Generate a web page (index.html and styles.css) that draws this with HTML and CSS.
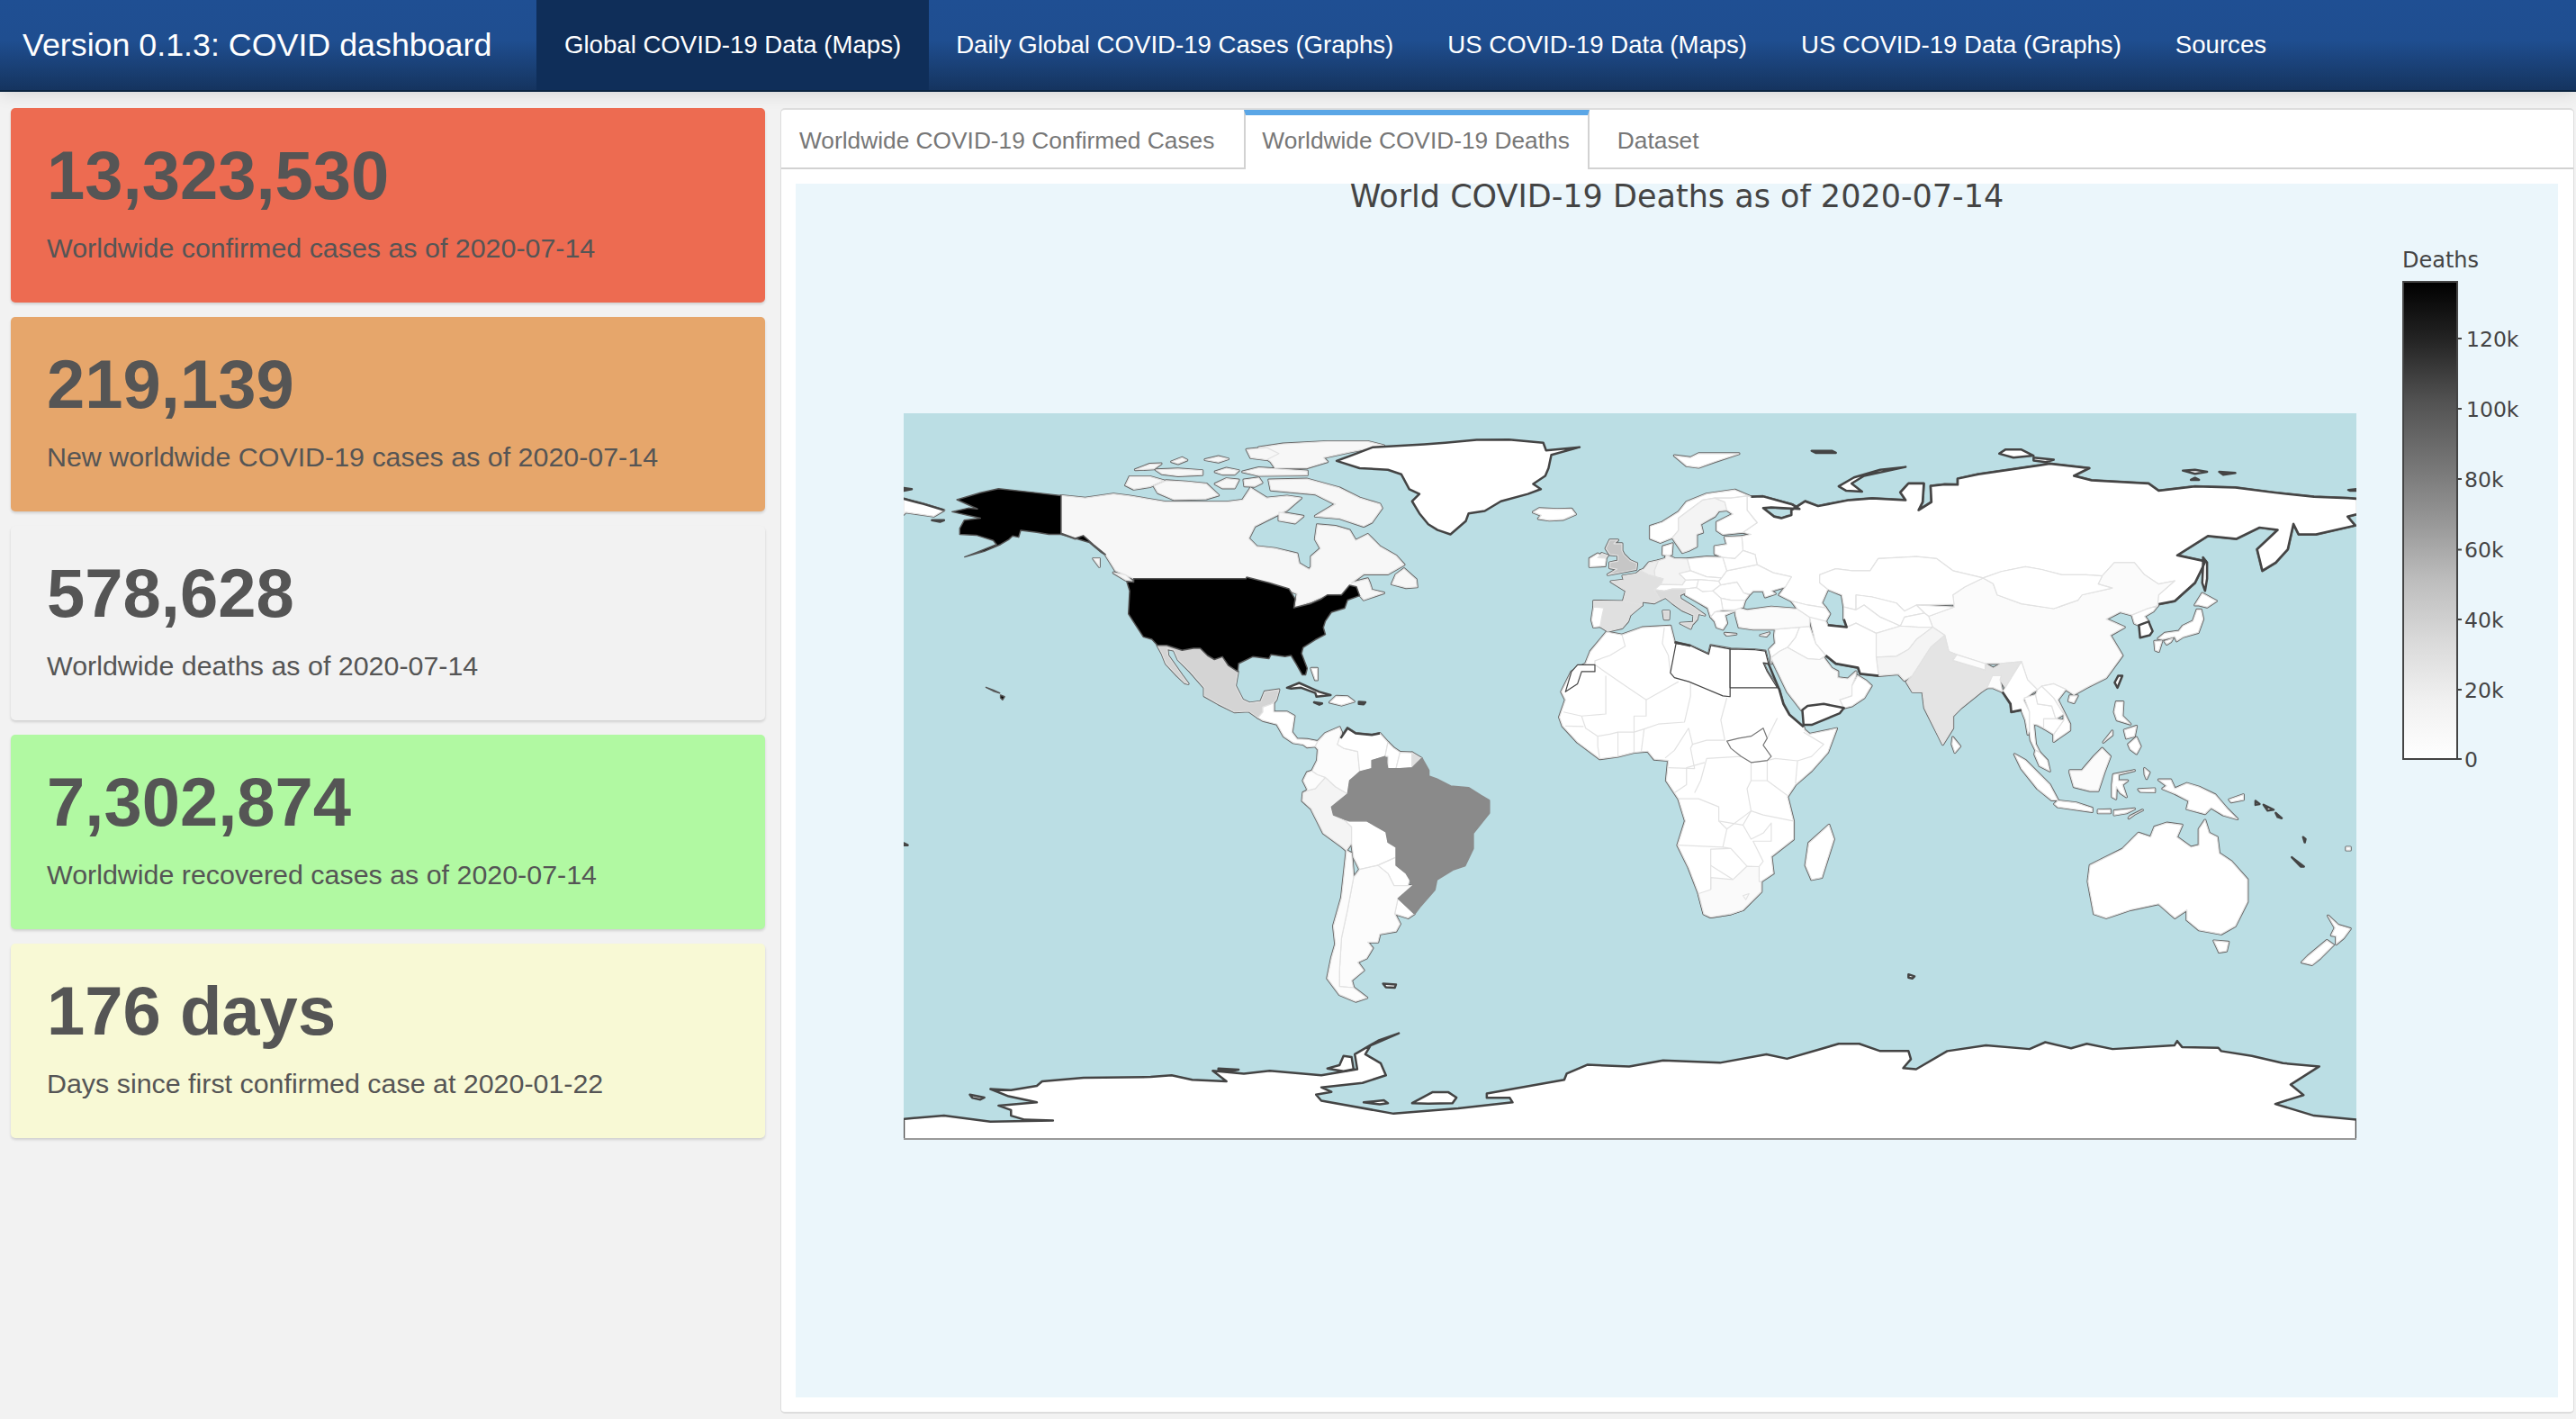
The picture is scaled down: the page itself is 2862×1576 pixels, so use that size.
FILE: index.html
```html
<!DOCTYPE html>
<html lang="en">
<head>
    <meta charset="UTF-8">
    <title>COVID dashboard</title>
    <link rel="stylesheet" href="styles.css">
</head>
<body>
<div class="navbar">
    <div class="brand">Version 0.1.3: COVID dashboard</div>
    <ul class="nav">
        <li class="nav-selected">Global COVID-19 Data (Maps)</li>
        <li>Daily Global COVID-19 Cases (Graphs)</li>
        <li>US COVID-19 Data (Maps)</li>
        <li>US COVID-19 Data (Graphs)</li>
        <li>Sources</li>
    </ul>
</div>
<div class="main">
    <div class="cards">
        <div class="card card-red"><h3>13,323,530</h3><p>Worldwide confirmed cases as of 2020-07-14</p></div>
        <div class="card card-orange"><h3>219,139</h3><p>New worldwide COVID-19 cases as of 2020-07-14</p></div>
        <div class="card card-grey"><h3>578,628</h3><p>Worldwide deaths as of 2020-07-14</p></div>
        <div class="card card-green"><h3>7,302,874</h3><p>Worldwide recovered cases as of 2020-07-14</p></div>
        <div class="card card-yellow"><h3>176 days</h3><p>Days since first confirmed case at 2020-01-22</p></div>
    </div>
    <div class="panel">
        <ul class="tabs">
            <li>Worldwide COVID-19 Confirmed Cases</li>
            <li class="tab-selected">Worldwide COVID-19 Deaths</li>
            <li>Dataset</li>
        </ul>
        <div class="tab-body">
<svg class="plot" width="1958" height="1348" viewBox="0 0 1958 1348">
    <defs>
        <linearGradient id="greys" x1="0" y1="1" x2="0" y2="0">
            <stop offset="0" stop-color="#ffffff"/>
            <stop offset="0.125" stop-color="#f0f0f0"/>
            <stop offset="0.25" stop-color="#d9d9d9"/>
            <stop offset="0.375" stop-color="#bdbdbd"/>
            <stop offset="0.5" stop-color="#969696"/>
            <stop offset="0.625" stop-color="#737373"/>
            <stop offset="0.75" stop-color="#525252"/>
            <stop offset="0.875" stop-color="#252525"/>
            <stop offset="1" stop-color="#000000"/>
        </linearGradient>
        <!-- coordinates are lon,lat -->
        <g id="land">
            <!-- north america -->
            <polygon class="c-canada" points="-141,69.6 -135,69 -128,70 -124,69.5 -115,68 -108,68 -100,68 -96,68.5 -94,71.5 -90,69 -85,69.5 -81.5,69 -85,66 -87,65 -93,62 -94.5,59 -92.5,57 -88,56.5 -82.5,55.2 -82,52.8 -79.5,51.3 -79,52 -79,54.5 -76.7,56.5 -78,58.8 -77.5,62.4 -73,62 -69.5,61 -68,58.5 -65,60 -62,57 -58,54.7 -56,52.5 -60,50.2 -66,50.2 -69,48 -65,49 -64.5,47.8 -64,46.2 -61,45.5 -66,43.8 -67,45 -69,47.4 -71,45.2 -75,45 -79,43.3 -83,42 -82.5,45.3 -89,48 -95,49 -123,49 -127.5,51 -130,55 -133,57.5 -135.5,59.7 -137.5,59 -141,60.3"/>
            <polygon class="c-canada" points="-61.5,66.5 -64,63 -66,62 -72,64 -78,64.5 -73,67.5 -78,70 -89,71 -89.5,73.5 -80,73.7 -72,71.5 -67,69 -62,67.5"/>
            <polygon class="c-canada" points="-118,72 -117,70.3 -113,68.6 -105,68.8 -102,69.7 -105,72.5 -110,73 -115,73.3"/>
            <polygon class="c-canada" points="-125,72.2 -123,71.2 -119,71.8 -115.5,73.3 -119,74.3 -124,74.3"/>
            <polygon class="c-canada" points="-117.500,76 -112,76.2 -106,75.8 -106,74.800 -112,74.500 -116,75"/>
            <polygon class="c-canada" points="-122.600,76 -119,77.400 -116.200,77.500 -118,76.200"/>
            <polygon class="c-canada" points="-113.600,78 -111,79 -109.800,78.400 -112,77.500"/>
            <polygon class="c-canada" points="-105.300,78.500 -102,79.300 -99.600,78.700 -102,77.900"/>
            <polygon class="c-canada" points="-102.800,75.500 -100,76.400 -97,75.800 -98,74.900 -101,74.900"/>
            <polygon class="c-canada" points="-102.800,72.500 -100,73.800 -97,73.500 -98,71.500 -101,71.500"/>
            <polygon class="c-canada" points="-95.700,73.500 -92,74 -91.200,72.800 -93,71.900 -95.500,72"/>
            <polygon class="c-canada" points="-92,81.5 -86,82.4 -75,83 -65,83 -61,82 -69,80.5 -76,79 -75,78 -80,76.5 -88,76.5 -89,78 -92,80"/>
            <polygon class="c-canada" points="-95,81 -90,81.5 -87,80 -90,78.5 -94,79"/>
            <polygon class="c-canada" points="-92,76.5 -80,75.7 -80,74.7 -92,74.6 -96,75.5"/>
            <polygon class="c-canada" points="-87,65.5 -81,64.5 -83,62.8 -87,63.5"/>
            <polygon class="c-canada" points="-59,47.7 -55.5,46.8 -52.8,47 -53,48.8 -56,51.5 -58,50"/>
            <polygon class="c-canada" points="-128,50.5 -125,50 -123.4,48.4 -125,48.7"/>
            <polygon class="c-canada" points="-133,54 -131.5,54 -131.5,52"/>
            <polygon class="c-white" points="-24,65.5 -22.5,66.4 -18,66.2 -14.5,66.3 -13.5,65 -16.5,63.7 -20,63.5 -22.7,63.9 -22,64.7"/>
            <polygon class="c-mexico" points="-117.1,32.5 -114.8,32.5 -111,31.3 -108.2,31.8 -106.5,31.8 -104.7,30 -103,29 -101,29.7 -99.5,27.5 -97.2,26 -97.8,22.5 -96,19 -94.3,18.2 -91.5,18.6 -90.5,21 -87,21.5 -87.7,19 -88.3,18.3 -89.1,17.9 -91,17.2 -91,16 -92.2,14.6 -94.5,16.2 -98,16 -102,18 -105.5,20 -105.5,22 -109,26 -112,29 -113,31.3 -114.7,31.7 -114.5,30 -111,25 -109.5,23 -110.3,23.2 -112.2,25 -115,28 -116,30.5"/>
            <polygon class="c-white" points="-92.2,14.6 -91,16 -91,17.2 -89.1,17.9 -88.3,18.3 -88.3,16 -85,16 -83.2,15 -83.8,11 -82.5,9.3 -80,9.2 -77.4,8.7 -78,7.5 -80,7.3 -81,8 -83.5,8.4 -85.8,10 -87.5,13 -91,13.9"/>
            <polygon class="c-white" points="-74.4,18.4 -72.8,19.9 -70,19.8 -68.4,18.6 -71.5,17.7"/>
            <polygon class="c-white" points="-79,26.8 -77.5,26.8 -77.5,24 -78,24"/>
            <!-- south america -->
            <polygon class="c-peru" points="-81.2,-6 -79,-8 -76,-14 -71.5,-17.3 -70.3,-18.3 -69,-16.5 -69,-12.5 -70.5,-11 -73.5,-9.5 -74,-7.5 -70,-4.3 -73,-2.5 -75.5,-0.2 -78,-3 -80,-3.5 -81,-4"/>
            <polygon class="c-light" points="-80,-3.5 -78,-3 -75.5,-0.2 -77.5,0.5 -78.8,1.4 -80,1 -81,-1 -80,-3"/>
            <polygon class="c-light" points="-77.4,8.7 -75.5,10.7 -72,12.2 -71.5,11 -72.5,8 -71,7 -67.5,6.2 -67,1.2 -69.5,-1 -70,-4.3 -73,-2.5 -75.5,-0.2 -77.5,0.5 -78.8,1.4 -77.5,4 -77.3,6.7 -78,7.5"/>
            <polygon class="c-white" points="-71.5,11 -71.7,9.5 -70,12 -68,10.7 -64,10.3 -62,10.7 -60,8.5 -60.7,5 -64,4 -64,2 -67,1.2 -67.5,6.2 -71,7 -72.5,8"/>
            <polygon class="c-white" points="-60,8.5 -58.5,7 -57,6 -58,2 -60,2 -60,5 -60.7,5"/>
            <polygon class="c-white" points="-57,6 -54,5.9 -54,2.2 -57,2 -58,2"/>
            <polygon class="c-guiana" points="-54,5.9 -51.7,4.5 -54,2.2"/>
            <polygon class="c-white" points="-69.5,-11 -65.3,-11 -60.5,-13.7 -60,-16.3 -58,-17.5 -58,-20 -62.5,-22 -67,-23 -68.5,-20 -69,-16.5 -69,-12.5 -70.5,-11"/>
            <polygon class="c-white" points="-58,-20 -58,-22 -55.5,-24 -54.6,-25.5 -55,-27 -58.5,-27 -60,-24 -62.5,-22"/>
            <polygon class="c-white" points="-57.5,-30.2 -53.5,-34 -55,-35 -58.3,-34"/>
            <polygon class="c-light" points="-67,-23 -62.5,-22 -60,-24 -58.5,-27 -55,-27 -53.8,-27 -57.5,-30.2 -58.3,-34 -57,-36.5 -58,-38.3 -62,-39 -62.5,-41 -65,-41 -63.8,-42.5 -65.3,-45 -67.5,-46 -66,-48 -69,-50.5 -68.5,-52.3 -72,-52 -72,-48 -71.5,-40 -70,-33 -68.5,-25"/>
            <polygon class="c-light" points="-70.3,-18.3 -69,-19 -68.5,-25 -70,-33 -71.5,-40 -72,-48 -72,-52 -68.5,-52.3 -65.2,-54.8 -68,-55.7 -72,-54 -75,-50 -74,-45 -73,-41.5 -73.5,-37 -71.5,-30 -70.3,-19"/>
            <polygon class="c-brazil" points="-51.7,4.5 -50,1.5 -50,0 -48,-0.7 -44.5,-2.5 -40,-2.9 -37,-4.8 -35,-6 -35,-9 -37,-11.5 -39,-14 -39,-17.8 -41,-22 -44,-23 -48,-25.5 -48.5,-28 -52,-32 -53.5,-34 -57.5,-30.2 -53.8,-27 -54.6,-25.5 -55.5,-24 -58,-22 -58,-20 -58,-17.5 -60,-16.3 -60.5,-13.7 -65.3,-11 -69.5,-11 -73.5,-9.5 -74,-7.5 -70,-4.3 -69.5,-1 -67,1.2 -64,2 -64,4 -60.7,5 -60,2 -57,2 -54,2.2"/>
            <!-- africa -->
            <polygon class="c-white" points="-5.8,35.8 -2,35.1 3,36.9 10,37.3 11,33.3 15,32.4 19.5,30.3 20,32.5 25,31.6 31,31.4 33.5,31.1 34.3,28 33,28.2 34,26 37,21.5 38,18 39.5,15.3 43,12.3 43.3,11.5 44.5,10.5 51.2,11.9 49,6 45,1.5 41,-2 39,-5 40.5,-11 40.5,-15.5 35,-19.8 35.5,-24 32.5,-26 32.5,-28.5 28,-33 25,-34 20,-34.8 18.3,-34 17,-29 14.5,-22.5 11.8,-17 13.7,-11 12,-5.5 9,-1 9.5,4 6,4.3 4.4,6.3 1,6 -3,5 -7.5,4.4 -13,8.5 -16.7,12.5 -17.5,14.7 -16,19 -17,21 -14.5,26 -11,28 -9.8,31"/>
            <polygon class="c-south" points="17,-29 20,-28 20,-25 25.5,-25.5 29,-22.2 32,-22.3 32,-26 32.5,-26 32.5,-28.5 28,-33 25,-34 20,-34.8 18.3,-34"/>
            <polygon class="c-white" points="49.3,-12 50.5,-15.5 47.5,-25 45,-25.5 43.5,-22 44.3,-16.5"/>
            <!-- russia and asia -->
            <polygon class="c-white" points="30,69.3 33,69.4 40.2,67.4 42,66.3 35,66.7 33,66.5 35.7,64.4 37.5,64 40,64.8 40,66 43.4,68.2 46.6,67 54.3,68.5 60,68.9 68.3,68.5 67,70.4 69,72.6 72.8,72.6 72.5,68 71.5,66 74.7,68 74.5,72 78,72.4 81.2,72.3 81.2,73.8 86.3,74.9 101.6,77.1 104,77.5 113.8,76.4 110,74.5 114.4,73.4 128.5,72.6 131,70.8 140,71.9 150,71.6 159.3,70.4 169.5,69.3 178,69 180,68.8 180,65 177.8,64.4 179.7,62.2 170,60 165.7,60 164.4,62.6 163,56.3 160,53 156.7,51 155.4,56.3 160.5,61.1 156,61.7 150.3,58.9 143.2,59.6 135.6,54.8 142.6,53.3 140,48 135,43.5 131,42.7 130.7,42.3 131,45 135,48.5 131,47.7 127.5,50 125,53 120,53 117,49.7 113,50 107,50 102,51.3 98,52 92,50.8 87.5,49.2 80,51 76,54 71,54.5 61.5,54 59.5,51 55,51 51,51.5 47,50 47,48 49,46.4 47.5,43 48.5,41.8 44,42.5 40,43.5 37,45 38.5,47 40,49.5 35.5,50.5 31.5,52.5 31,55 28,56 27.7,59.5 30,60 28,60.5 31.5,62.9 29,66 29,69.5"/>
            <polygon class="c-white" points="-180,68.8 -175,67.5 -170,66 -172.5,64.5 -176,65 -179.5,65.5 -180,65"/>
            <polygon class="c-china" points="131,45 135,48.5 131,47.7 127.5,50 125,53 120,53 117,49.7 116,47.7 119.5,46.7 112,45 111,43.7 105,41.6 97,42.8 91,45 90,47.8 87.5,49.2 83,47 80,45 80.3,42 74,39.7 75,37 78,35 79,31 81,30.2 88,28 92,28 97,28.5 98.5,24 101,21.5 102,22.4 105,23 108,21.6 110,20.3 113,22 118,24.5 122,30 119,35 122.5,37 118,39 121.5,40.8 124.4,40 128,41.5 130.7,42.3"/>
            <polygon class="c-white" points="87.5,49.2 92,50.8 98,52 102,51.3 107,50 113,50 117,49.7 116,47.7 119.5,46.7 112,45 111,43.7 105,41.6 97,42.8 91,45 90,47.8"/>
            <polygon class="c-white" points="47,50 51,51.5 55,51 59.5,51 61.5,54 71,54.5 76,54 80,51 87.5,49.2 83,47 80,45 80.3,42.7 71,42.5 68,41 66,43 60,44.5 56,45 56,41.3 53,42 52.5,45 49,46.4 47,48"/>
            <polygon class="c-white" points="56,45 60,44.5 66,43 68,41 71,42.5 73,40.5 68,39.5 67,37.3 62,39.5 58,42.5 56,41.3"/>
            <polygon class="c-white" points="53,42 56,41.3 58,42.5 62,39.5 67,37.3 61,35.5 56,38 53.7,37 53,39"/>
            <polygon class="c-white" points="71,42.5 80.3,42 74,39.7 73,40.5"/>
            <polygon class="c-white" points="68,39.5 73,40.5 74,39.7 75,37 71.5,37 67,37.3"/>
            <polygon class="c-china" points="61,35.5 67,37.3 71.5,37 75,37 71,34 69,31.5 66,29.8 61,29.6"/>
            <polygon class="c-peru" points="61,29.6 66,29.8 69,31.5 71,34 75,37 78,35 74.5,32 70,25 68,23.8 66.5,25.4 61.6,25"/>
            <polygon class="c-india" points="74.5,32 78,35 79,31 81,30.2 80,28.8 88,26.4 88.2,27.9 90,26.8 92,28 97,28.5 94.5,24.5 93,22 91.7,24 92,25 89.8,25 88.5,22 87,21 82,17 80,15 80,12 77.5,8 76,11 73,17 72.5,21 70,21 68.5,23.5 70,25"/>
            <polygon class="c-light" points="80,28.8 81,30.2 88,28 88,26.4"/>
            <polygon class="c-light" points="88.5,22 89.8,25 92,25 91.7,24 92.3,21 90,22"/>
            <polygon class="c-white" points="80,9.7 81.8,7.5 80.5,6 79.8,8"/>
            <polygon class="c-white" points="44.5,39.5 48,39.5 49,37.5 53.7,37 56,38 61,35.5 61,29.6 61.6,25 57,25.5 56.5,27 51,28 48.5,30 46,33"/>
            <polygon class="c-white" points="42,37 44.5,37.2 46,33 48.5,30 47,29 44,29.2 39,32 41,34.5"/>
            <polygon class="c-white" points="36,36.5 42,37 41,34.5 39,32 37,31 35,29.5 34.5,31.5 36,33 35.8,35"/>
            <polygon class="c-china" points="26.2,40 26,42 29,41.2 35,42 41.5,41.5 44.5,39.5 44.5,37.2 42,37 36,36.5 30.5,36.5 27,37"/>
            <polygon class="c-white" points="40,43.5 44,42.5 48.5,41.8 49.5,40.3 48.5,38.5 44.5,39.5 41.5,41.5"/>
            <polygon class="c-china" points="35,28 34.9,29.5 39,21 42.5,16.5 44,17.5 48,18 53,17 52,19 55,20 55,22.5 56,25 56,26 54,24.2 51.5,24.5 51.5,26 50,26.8 48,29.5 47,29 44,29.2 39,32 37,31 35,29.5"/>
            <polygon class="c-white" points="52,19 55,20 55,22.5 56.4,25 58.5,23.7 59.8,22.5 58,19.5 55,17.5 53,17"/>
            <!-- south east asia -->
            <polygon class="c-white" points="92.3,21 94.3,18 94.5,16 97,16.5 98,14 98.6,10.5 99,11.5 99,16 97.5,19 100,21 101,21.5 98.5,24 97,28.5 94.5,24.5 93,22"/>
            <polygon class="c-white" points="99,16 99,11.5 99.3,9 100.5,6.5 101.5,6 100.5,8 100,13 101,12.8 102.5,12 102.5,14.3 105.5,14.3 104.5,17.5 101,18 100.5,20.3 97.7,19.5"/>
            <polygon class="c-white" points="100.5,20.3 101,21.5 102,22.4 105,19.5 107.5,15.5 105.5,14.3 104.5,17.5 101,18"/>
            <polygon class="c-white" points="102,22.4 105,23 108,21.6 106,19 109,13 109,11.5 105,8.7 105,10.5 107.5,14 107.5,15.5 105,19.5"/>
            <polygon class="c-white" points="102.5,12 105,10.5 107.5,14 105.5,14.3 102.5,14.3"/>
            <polygon class="c-white" points="100.5,6.5 101.5,6 103.4,4 104,1.4 101.5,2.7 100.3,5.5"/>
            <polygon class="c-white" points="95.3,5.5 98,4 104,-2 106,-5.8 104.5,-5.8 101,-3 97,2"/>
            <polygon class="c-white" points="105.2,-6.8 106,-6 110.5,-6.5 114.5,-7.8 114.5,-8.7 106,-7.5"/>
            <polygon class="c-white" points="116,-8.3 119,-8.2 119,-9 116,-9"/>
            <polygon class="c-white" points="120,-8.5 125,-8 123,-9 120,-9.5"/>
            <polygon class="c-white" points="124,-9.8 127,-8.3 125,-9.3 123.6,-10.3"/>
            <polygon class="c-china" points="109,1.5 112,1.5 115,5 117,7 119,5 117.5,1 116,-3.5 114,-3.5 110,-2.5 109,1"/>
            <polygon class="c-white" points="119.8,0.5 125,1.5 121,0.5 121,-1 123.3,-1 122,-2 123,-5 121.5,-4 120.5,-2.5 120.4,-5.5 119.5,-5 119.5,-2"/>
            <polygon class="c-white" points="127.5,2 128.7,1 128,-0.5 127.6,0.5"/>
            <polygon class="c-white" points="126,-3.2 130,-3 130,-3.8 126.5,-3.7"/>
            <polygon class="c-white" points="131,-0.8 134,-0.8 135,-3 138,-1.7 141,-2.6 145,-4.5 148,-8 150.5,-10.5 147,-9.5 144,-7.7 142.5,-9.2 138,-8 138.5,-6 135,-4.2 132,-3 133,-2.3"/>
            <polygon class="c-white" points="148.5,-5.7 152,-4.5 152,-5.7 149,-6.3"/>
            <polygon class="c-white" points="120.5,18.5 122.2,18.5 122,15 124,13 120.7,14 120,16"/>
            <polygon class="c-white" points="122.5,11.5 125.5,12.5 125,10 123,9.5"/>
            <polygon class="c-white" points="123.5,8 125.5,9.7 126.5,7.5 125.5,5.7 124,6.8"/>
            <polygon class="c-white" points="117.3,8.5 119.5,11.3 119.5,10.3"/>
            <polygon class="c-white" points="109,20 110.9,20 110,18.3 108.7,18.7"/>
            <polygon class="c-white" points="130.9,34.2 132.5,35.5 136,36 137,37.3 139.5,38.5 140.5,41.3 141.5,41.3 142,39 140.8,35.7 137,34.6 135.5,33.6 135,34.7 132,34"/>
            <polygon class="c-white" points="130,33.5 131.8,33.6 131,31 130.2,31.3"/>
            <polygon class="c-white" points="132.5,33.5 134.5,34.2 134,33.4 133,32.8"/>
            <polygon class="c-white" points="140,42.5 141.8,45.4 145.3,43.5 143,42 141,42.5"/>
            <polygon class="c-white" points="124.4,40 128,41.5 130.7,42.3 129.7,41 127.5,39.7 128.5,38.4 126.1,37.5 125,38"/>
            <!-- europe -->
            <polygon class="c-white" points="5,61 5,59 7.5,58 10.5,59.2 12,61 12,64 14,65.5 18,68.5 21,69 25,69 29,69.5 30,69.3 26,71 19,70 14,68 12,65.5 8,63 5,62"/>
            <polygon class="c-peru" points="10.5,59.2 13,55.5 14.5,56 16.5,57 16.5,60 18,60.5 17.5,62.5 21,64.5 22,65.8 24,66 23.5,68 21,69 18,68.5 14,65.5 12,64 12,61"/>
            <polygon class="c-white" points="24,66 25.5,65 21.5,63 21.5,61 23,60 28,60.5 31.5,62.9 29,66 29,69.5 25,69 21,69 23.5,68"/>
            <polygon class="c-white" points="21,57 24,57.5 23.5,59.3 27.7,59.5 28,56 26,54 23,54.3 21,55.2"/>
            <polygon class="c-white" points="8.1,55 8.2,57 10.5,57.7 10.3,55 9.5,54.8"/>
            <polygon class="c-peru" points="6,51 7,53.5 8.7,54 9,54.9 11,54 14.2,53.9 15,51 12.2,50.3 13.8,48.7 13,47.5 7.6,47.6 8.2,49 6.2,49.5"/>
            <polygon class="c-belgium" points="3.4,51.4 4.7,53 7,53.5 6,51 6.2,49.5 4.5,50 2.5,51"/>
            <polygon class="c-france" points="2.5,51 4.5,50 6.2,49.5 8.2,49 7.6,47.6 6,46.3 7.5,43.8 6,43 3,43.4 3,42.5 -1.7,43.4 -1,46 -4.7,48.3 -1.5,48.7 -1.8,49.7 1.5,50.2"/>
            <polygon class="c-white" points="6,46.3 7.6,47.6 13,47.5 13.8,48.7 17,48.8 16.5,46.8 13.7,46.5 10.5,46.5 8.5,46"/>
            <polygon class="c-italy" points="7.5,43.8 6,46.3 8.5,46 10.5,46.5 13.7,46.5 13.7,45.6 12.3,45 12.5,44 16,41.8 18.5,40 16.9,40.4 16.6,39 15.7,38 15.8,40 13,41.2 10.5,43 8.8,44.4"/>
            <polygon class="c-italy" points="12.5,38 15.6,38.2 15,36.7"/>
            <polygon class="c-italy" points="8.2,41 9.7,41 9.6,39 8.5,39"/>
            <polygon class="c-france" points="-9,43.5 -1.7,43.4 3,42.5 0,40 -0.5,38.5 -2,36.8 -5.5,36 -7.4,37.2 -7,39.5 -6.5,41.8 -9,42"/>
            <polygon class="c-white" points="-9,42 -6.5,41.8 -7,39.5 -7.4,37.2 -9,37 -9.5,38.8"/>
            <polygon class="c-uk" points="-5.5,50 1.5,51.3 1.7,52.8 0,53.5 -1.5,55 -2,56 -2,57.7 -4,57.7 -3,58.6 -5,58.6 -6,56.5 -5,55 -3,54.8 -3,53.4 -5,53 -5,51.7 -3.2,51.4"/>
            <polygon class="c-white" points="-10,52 -6.2,52.2 -6,53.5 -6,54.1 -8,55.2 -10,54"/>
            <polygon class="c-guiana" points="-8,54.2 -6,54.1 -5.5,54.8 -7,55.3"/>
            <polygon class="c-white" points="14.2,53.9 19,54.4 23,54.3 24,51 22.7,49.2 19,49.5 15,51"/>
            <polygon class="c-white" points="12.2,50.3 15,51 19,49.5 22.7,49.2 22,48.4 17,48.8 13.8,48.7"/>
            <polygon class="c-white" points="16.5,46.8 17,48.8 22,48.4 22.5,47.5 20.5,46 18,45.8"/>
            <polygon class="c-white" points="22.5,47.5 26.5,48.2 28.2,45.5 29.5,45 28.5,43.7 25,43.7 22.5,44.2 20.5,46"/>
            <polygon class="c-white" points="22.5,44.2 25,43.7 28.5,43.7 28,42 26,41.3 23,41.3"/>
            <polygon class="c-white" points="20,39.6 21,40.8 26,41 23.5,40 24,38 23,36.5 21.5,37 21,38.5"/>
            <polygon class="c-white" points="13.7,45.6 13.7,46.5 16.5,46.8 18,45.8 20.5,46 22.5,44.2 23,41.3 21,40.8 20,39.6 19.3,41.8 15.5,44 13.7,45"/>
            <polygon class="c-white" points="22.7,49.2 24,51 31.5,52.5 35.5,50.5 40,49.5 38.5,47 35,46 36,45.3 33.5,44.5 33,46 30.5,46 29.7,45.2 28.2,45.5 26.5,48.2 22.5,47.5 22,48.4"/>
            <polygon class="c-white" points="24,51 23,54.3 26,54 28,56 31,55 31.5,52.5"/>
            <polygon class="c-white" points="23.5,35.5 26.3,35.3 24,35"/>
            <polygon class="c-white" points="32.3,35 34.5,35.6 33.8,34.8"/>
            <!-- oceania -->
            <polygon class="c-white" points="114,-22 113.5,-26 115,-34 118,-35 124,-33 131,-31.5 135,-35 138,-33 138,-35.5 141,-38 146.5,-39 150,-37 153,-31 153,-25.5 149,-21 146,-19 145.5,-15 143.5,-14 142.5,-10.8 141,-13 141,-17 139,-17.5 135.5,-15 136.8,-12 133,-11.5 130,-12.5 129,-15 126,-14 122,-18 117,-20.5"/>
            <polygon class="c-white" points="144.7,-40.7 148.3,-41 147.8,-43.2 146,-43.5"/>
            <polygon class="c-white" points="173,-34.5 175.5,-36.8 178.5,-37.7 176.8,-40 175,-41.5 175,-39.5 173.8,-39.3 174.7,-37.5"/>
            <polygon class="c-white" points="172.7,-40.6 174.3,-41.7 171,-45 169,-46.6 166.5,-46 168,-44.5"/>
            <polygon class="c-white" points="177.5,-17.5 178.5,-17.5 178.5,-18.2 177.5,-18.2"/>
            <polygon class="c-white" points="15,79 17,80 27,80 21,78 17,76.6 14,77 11,79.5"/>
        </g>
    </defs>

    <text class="plot-title" x="979" y="26">World COVID-19 Deaths as of 2020-07-14</text>

    <svg class="map" x="120" y="255" width="1614" height="807" viewBox="-180 -90 360 180" preserveAspectRatio="none">
        <rect class="ocean" x="-180" y="-90" width="360" height="180"/>
        <g transform="scale(1 -1)">
            <use href="#land" class="coast"/>
            <use href="#land" class="fills"/>

            <polygon class="usa" points="-141,69.6 -148,70.4 -156.5,71.3 -161,70.3 -166.8,68.6 -161.7,66.3 -164,66.5 -168,65.6 -161,64 -165,63.5 -166.1,61.5 -166.1,60 -162,59.8 -157.8,58.5 -157,57.5 -162,55.5 -164.9,54.4 -160,55.8 -156,57.5 -154,58.7 -153,59.6 -151.5,59.3 -151,61 -147,60.5 -144,60 -141,60 -137,58.9 -134,58 -131,55.5 -130,55 -133,57.5 -135.5,59.7 -137.5,59 -141,60.3"/>
            <polygon class="usa" points="-123,49 -95.2,49 -95,49.4 -89.5,48 -84.5,46.5 -83,44 -83.3,41.8 -79,42.9 -76.5,44 -75,45 -71.5,45 -69.5,47.4 -67.8,47 -67,44.8 -70,43.7 -70.7,41.7 -74,40.7 -75.5,38.5 -76,36.9 -75.5,35.2 -78,33.9 -81,32 -81.4,30.5 -80,26.8 -80.4,25.2 -81.2,25.2 -82.8,28 -84,30 -85.5,29.7 -89,30.2 -89.5,29.2 -93.5,29.7 -97,28 -97.2,26 -99.5,27.5 -101,29.7 -103,29 -104.7,30 -106.5,31.8 -108.2,31.8 -111,31.3 -114.8,32.5 -117.1,32.5 -118.5,34 -120.6,34.6 -122.5,37.5 -124.3,40.3 -124,46 -124.7,48.3 -123,48.2"/>
            <polygon class="usa" points="-156,20.2 -155,19.8 -155.5,19 -156,19.5"/>
            <polygon class="usa" points="-159.6,22.1 -157.8,21.4 -156.2,20.7 -157.8,21.2"/>

            <!-- borders inside africa -->
            <g class="borders">
                <polyline points="-2,35.1 -1.2,32.3 -5,30 -8.7,28.7 -8.7,27.7 -4.8,25 1,21 4,19 12,23.5"/>
                <polyline points="8.5,36.9 8,33 9.5,30 10,25.7"/>
                <polyline points="-6,25 -6,15.5 -12,15 -16.5,16"/>
                <polyline points="4,19 4,15 1,15 1,11 3.5,11.8 7,13 13.5,13.5 15,20 15,23"/>
                <polyline points="3.5,11.8 2.8,6.4"/>
                <polyline points="14.5,12 11,6.5 8.7,4.6"/>
                <polyline points="24,19.5 22.5,14 23.5,9 19,9 15.5,8 14.5,12"/>
                <polyline points="36.5,14.5 34,9.5"/>
                <polyline points="43,11 48,8 45,5 41.5,3.9 36,4.5 34,4 30,3.5"/>
                <polyline points="41.5,3.9 41,-1.7"/>
                <polyline points="34,-1 39,-4.7"/>
                <polyline points="34,4 34,-1 30,-1 30,3.5 27.5,5 19,4.5 17.5,-1 16,-4"/>
                <polyline points="12,-5.5 17,-5.5 22,-7.5 22,-11 28,-12 30,-8.5 29,-3 30,-1"/>
                <polyline points="11,-4 14,-2 14,2.2 18.5,3.5"/>
                <polyline points="9.5,2.2 16,2 15,7 15.5,8"/>
                <polyline points="11.8,-17 23,-17.5 24,-13 22,-11"/>
                <polyline points="23,-17.5 25,-17.8 20,-18 20,-28"/>
                <polyline points="20,-22 25.5,-25.5"/>
                <polyline points="25,-17.8 29,-22.2"/>
                <polyline points="24,-13 30,-8.5 33,-9.5 40.5,-11"/>
                <polyline points="28,-12 30,-15.5 33,-14 35,-11.5 35,-16 30.5,-16 33,-21 32,-22.3"/>
                <polyline points="-12,15 -11,12 -8,10 -8,7.5 -7.5,4.4"/>
                <polyline points="-11.5,12.4 -16,12.5"/>
                <polyline points="-8,10 -5,10.5 -3,11 -3,5"/>
                <polyline points="-3,11 1,11 1,6"/>
                <polygon points="28,-29.5 29.5,-29 28.7,-30.5"/>
            </g>

            <!-- countries with a dark outline -->
            <g class="dark">
                <polygon points="-72.7,78.2 -67,76.4 -60,76 -56.7,74.9 -54.7,71.2 -52.2,70 -54,68.2 -52.2,65.2 -50,62.5 -47.7,61.1 -44.5,60 -40.7,63.3 -40,65.2 -36,65.8 -32,68.2 -25.3,70 -22.1,71.2 -24,72.5 -21,74.5 -20.2,76.4 -19.5,79.7 -12.5,81.6 -20.8,80.8 -21.5,82.7 -30,83.5 -38,83.4 -45.8,82.7 -51,82.3 -63.7,81.6 -67.6,80.1"/>
                <polygon points="-85,22 -82,23.2 -77,21 -74.2,20.2 -77.7,19.8 -78,20.7 -81.5,22 -84,21.8"/>
                <polygon points="-78.3,18.4 -76.3,18.1 -77,17.8"/>
                <polygon points="-67.2,18.5 -65.6,18.4 -66,17.9 -67.2,18"/>
                <polygon points="-61.2,-51.3 -58,-51.5 -58.3,-52.3 -60.5,-52.2"/>
                <polygon points="69,-49 70.5,-49.5 70,-50 69,-49.8"/>
                <polygon points="68.3,76.7 62,76 55.5,74.1 51.7,71.9 53.6,70.8 57.5,70.6 54.9,72.6 58,74.5"/>
                <polygon points="45,80.7 50,80.7 51,80.2 46,80.2"/>
                <polygon points="91.5,80 93,81 97,81 100,79.5 95,79"/>
                <polygon points="100,79 105,78.5 103,77.9 100,78.3"/>
                <polygon points="137,75.8 140,75 143,75.5 140,76"/>
                <polygon points="146,75.5 150,75.2 147,74.8"/>
                <polygon points="140,74 141,73.5 139,73.5"/>
                <polygon points="178,71 180,71.2 180,70.8 178.5,70.8"/>
                <polygon points="-180,71.5 -178,71.2 -180,70.8"/>
                <polygon points="142,54.3 143,53 143,49 142.5,46 141.8,48 142,52"/>
                <polygon points="126.1,37.5 128.5,38.4 129.5,36 128.8,35 126.4,34.4"/>
                <polygon points="121,25 122,25 120.8,22 120.1,23.3"/>
                <polygon points="42.7,16.5 43,12.8 45,12.8 52,15.7 53,17 48,18 44,17.5"/>
                <polygon points="155,-6 156,-6.8 155,-7"/>
                <polygon points="157,-7 159.5,-8.2 158,-8.4"/>
                <polygon points="160,-9 161.5,-10.3 160.5,-10"/>
                <polygon points="166.8,-15 167.4,-15.5 167.2,-16.3"/>
                <polygon points="164,-20 167,-22.3 166.2,-22.3"/>
                <polygon points="-173,63.5 -170,63.5 -171,63.1"/>
                <polygon points="-180,-16.5 -179,-17 -180,-17"/>
                <!-- antarctica -->
                <polygon points="-180,-85 -179.8,-84.8 -170,-84 -158.5,-85.5 -143,-85.2 -150,-85 -153.4,-84 -153.4,-82.6 -156.5,-81.5 -147,-80.7 -154,-79.2 -158.5,-77.4 -153.4,-77.7 -147,-76.6 -145.7,-75.5 -135.4,-74.6 -118.8,-74.4 -113.6,-74 -108.5,-75.1 -100,-75.5 -103.4,-72.9 -95.7,-73.6 -89.3,-72.9 -76.5,-74 -67.6,-72.5 -68.2,-68.8 -62.4,-65.4 -57.3,-63.6 -64.3,-66.6 -65.6,-68.8 -61.8,-71 -60.5,-74 -66.3,-75.9 -76.5,-77 -74,-78.1 -77.8,-78.8 -76.5,-80.3 -58.6,-83.5 -42.6,-82.2 -29.1,-80.7 -29.8,-79.6 -35.5,-79.6 -35.5,-78.5 -16.3,-75.1 -15.7,-73.6 -10.6,-71.4 -0.2,-71.8 8.2,-70.3 22.3,-70.9 33.8,-68.8 38.9,-69.9 51.7,-66.2 56.8,-66.2 62,-68 69,-68 69.6,-70 67.7,-72.2 70.9,-72.5 78.6,-68 88.2,-66.6 99,-67.5 102.9,-65.8 109.3,-67.3 113.2,-66.2 119.6,-67.5 134.9,-66.6 135.6,-65.5 136.8,-67 145.8,-67.2 146.5,-68 154.1,-69.2 161.8,-71 170.8,-71.8 163.7,-76.3 166.9,-78.9 159.9,-81.1 169.5,-84 180,-85 180,-92 -180,-92"/>
                <polygon points="-163.6,-78.8 -160,-79.5 -161,-80 -163,-79.6"/>
                <polygon points="-102,-72.3 -97,-72.6 -99,-73 -102,-72.8"/>
                <polygon points="-66,-80.7 -61,-80.2 -60,-80.9 -62,-81.2"/>
                <polygon points="-54,-80.9 -49,-78.2 -45,-78.2 -43,-79.5 -44,-80.9 -50,-81"/>
                <polygon points="-75,-72.3 -71,-73 -68.5,-72.5 -69,-69.5 -71,-69.2 -72,-71.5"/>
            </g>
            <g class="dark-thin">
                <polygon points="10,25.7 11.4,33 15,32.4 19.5,30.3 20,32.5 24.8,31.6 24.8,19.8 23,20 14.6,23.5 11,24.5"/>
                <polygon points="24.8,31.6 31,31.4 33.5,31.1 34.3,28 33,28.2 34,26 36.5,22 24.8,22"/>
                <polygon class="grey-line" points="24,8.8 27,9.5 30,10 33,12 34,9.5 33,7.8 35,5 34,4 30,3.5 27.5,5 25,7"/>
                <polygon points="-13,27.7 -8.7,27.7 -8.7,26 -12,26 -13,23 -16,21 -14.5,26"/>
            </g>
            <g class="dark-coast">
                <polyline points="30,69.3 33,69.4 40.2,67.4 42,66.3 35,66.7 33,66.5 35.7,64.4 37.5,64 40,64.8 40,66 43.4,68.2 46.6,67 54.3,68.5 60,68.9 68.3,68.5 67,70.4 69,72.6 72.8,72.6 72.5,68 71.5,66 74.7,68 74.5,72 78,72.4 81.2,72.3 81.2,73.8 86.3,74.9 101.6,77.1 104,77.5 113.8,76.4 110,74.5 114.4,73.4 128.5,72.6 131,70.8 140,71.9 150,71.6 159.3,70.4 169.5,69.3 178,69 180,68.8"/>
                <polyline points="180,65 177.8,64.4 179.7,62.2 170,60 165.7,60 164.4,62.6 163,56.3 160,53 156.7,51 155.4,56.3 160.5,61.1 156,61.7 150.3,58.9 143.2,59.6 135.6,54.8 142.6,53.3 140,48 135,43.5 131,42.7"/>
                <polyline points="-180,68.8 -175,67.5 -170,66"/>
                <polyline points="11,33.3 15,32.4"/>
                <polyline points="34.3,28 37,21.5 38,18 39.5,15.3 43,12.3"/>
                <polyline points="48.5,30 51,28 56.5,27 57,25.5 61.6,25"/>
                <polyline points="49,37.5 53.7,37 53,39"/>
                <polyline points="92.3,21 94.3,18 94.5,16 97,16.5"/>
                <polyline points="-71.7,9.5 -70,12 -68,10.7 -64,10.3 -62,10.7"/>
            </g>
        </g>
    </svg>
    <path class="map-edge" d="M120.500 1040V1061M1733.500 1040V1061"/>
    <path class="map-base" d="M120 1061H1734"/>

    <text class="cb-title" x="1785" y="93">Deaths</text>
    <rect class="cb-bar" x="1786" y="109" width="60" height="530"/>
    <path class="cb-ticks" d="M1847 172h4M1847 250h4M1847 328h4M1847 406.500h4M1847 484h4M1847 562h4M1847 639h4"/>
    <text class="cb-tick" x="1856" y="180.500">120k</text>
    <text class="cb-tick" x="1856" y="258.500">100k</text>
    <text class="cb-tick" x="1854" y="336.500">80k</text>
    <text class="cb-tick" x="1854" y="415">60k</text>
    <text class="cb-tick" x="1854" y="492.500">40k</text>
    <text class="cb-tick" x="1854" y="570.500">20k</text>
    <text class="cb-tick" x="1854" y="647.500">0</text>
</svg>
        </div>
    </div>
</div>
</body>
</html>
```

FILE: styles.css
```css
*{
    margin: 0;
    padding: 0;
    box-sizing: border-box;
}
body{
    width: 2862px;
    height: 1576px;
    overflow: hidden;
    background-color: #f2f2f2;
    font-family: "Liberation Sans", Arial, sans-serif;
}
ul{
    list-style: none;
}
.navbar{
    display: flex;
    height: 102px;
    background: linear-gradient(#1f4f93, #1f4e90 45%, #15345f);
    border-bottom: 2px solid #0b2440;
    box-shadow: 0 2px 18px rgba(0,0,0,.12);
    color: #fff;
}
.brand{
    width: 596px;
    padding-left: 25px;
    font-size: 35.800px;
    line-height: 100px;
}
.nav{
    display: flex;
}
.nav li{
    padding: 0 30px;
    font-size: 27.600px;
    line-height: 100px;
}
.nav .nav-selected{
    padding: 0 31px;
    background: #0f2e59;
}
.main{
    display: flex;
    gap: 17px;
    padding: 18px 2px 0 12px;
}
.cards{
    display: flex;
    flex-direction: column;
    gap: 16px;
    width: 838px;
}
.card{
    height: 216px;
    padding: 33px 40px 0;
    border-radius: 5px;
    box-shadow: 0 2px 3px rgba(0,0,0,.14);
    color: #555;
}
.card h3{
    font-size: 76px;
    line-height: 84px;
    font-weight: bold;
    margin-bottom: 18px;
}
.card p{
    font-size: 30.400px;
    line-height: 40px;
}
.card-red{ background: #ed6b51; }
.card-orange{ background: #e6a66b; }
.card-grey{ background: #f2f2f2; }
.card-green{ background: #b1f9a2; }
.card-yellow{ background: #f8f9d5; }
.panel{
    flex: 1;
    height: 1450px;
    background: #fff;
    border-top: 2px solid #ddd;
    border-left: 1px solid #ddd;
    border-right: 1px solid #ddd;
    border-bottom: 2px solid #ddd;
    border-radius: 5px;
}
.tabs{
    display: flex;
    height: 66px;
    border-bottom: 2px solid #d2d2d2;
    color: #777;
    font-size: 26.300px;
}
.tabs li{
    padding: 0 20px;
    margin-right: 13px;
    line-height: 68px;
}
.tabs .tab-selected{
    height: 66px;
    margin-right: 11px;
    padding: 0 20px 0 18px;
    background: #fff;
    border-top: 6px solid #5aa6e6;
    border-left: 2px solid #d2d2d2;
    border-right: 2px solid #d2d2d2;
    line-height: 56px;
}
.tab-body{
    padding: 16px 16px 0 16px;
}
.plot{
    display: block;
    background: #ebf6fb;
}
.plot-title{
    font-family: "DejaVu Sans", sans-serif;
    font-size: 35px;
    text-anchor: middle;
    fill: #444;
}
.ocean{
    fill: #bbdee4;
}
#land polygon, .usa, .borders polyline, .borders polygon, .dark polygon, .dark-thin polygon, .dark-coast polyline{
    vector-effect: non-scaling-stroke;
    stroke-linejoin: round;
}
.coast{
    stroke: #666;
    stroke-width: 3px;
}
.fills{
    stroke: #e2e2e2;
    stroke-width: 1.200px;
}
.c-white{ fill: #fff; }
.c-light{ fill: #fcfcfc; }
.c-china{ fill: #fbfbfb; }
.c-south{ fill: #fafafa; }
.c-canada{ fill: #f7f7f7; }
.c-peru{ fill: #f4f4f4; }
.c-belgium{ fill: #ededed; }
.c-india{ fill: #e4e4e4; }
.c-france{ fill: #e0e0e0; }
.c-guiana{ fill: #dedede; }
.c-italy{ fill: #dadada; }
.c-mexico{ fill: #d4d4d4; }
.c-uk{ fill: #c6c6c6; }
.c-brazil{ fill: #8a8a8a; stroke: #8a8a8a; }
.usa{
    fill: #000;
    stroke: #555;
    stroke-width: 1.500px;
}
.borders polyline, .borders polygon{
    fill: none;
    stroke: #e2e2e2;
    stroke-width: 1.200px;
}
.dark polygon{
    fill: #fff;
    stroke: #444;
    stroke-width: 2.500px;
}
.dark-thin polygon{
    fill: #fff;
    stroke: #444;
    stroke-width: 1.200px;
}
.dark-thin .grey-line{
    stroke: #777;
}
.dark-coast polyline{
    fill: none;
    stroke: #444;
    stroke-width: 2.500px;
}
.map-edge{
    fill: none;
    stroke: #444;
    stroke-width: 1px;
}
.map-base{
    fill: none;
    stroke: #999;
    stroke-width: 2px;
}
.cb-title, .cb-tick{
    font-family: "DejaVu Sans", sans-serif;
    font-size: 23.500px;
    fill: #444;
}
.cb-title{
    font-size: 24px;
}
.cb-bar{
    fill: url(#greys);
    stroke: #444;
    stroke-width: 2px;
}
.cb-ticks{
    stroke: #444;
    stroke-width: 2px;
}
```
